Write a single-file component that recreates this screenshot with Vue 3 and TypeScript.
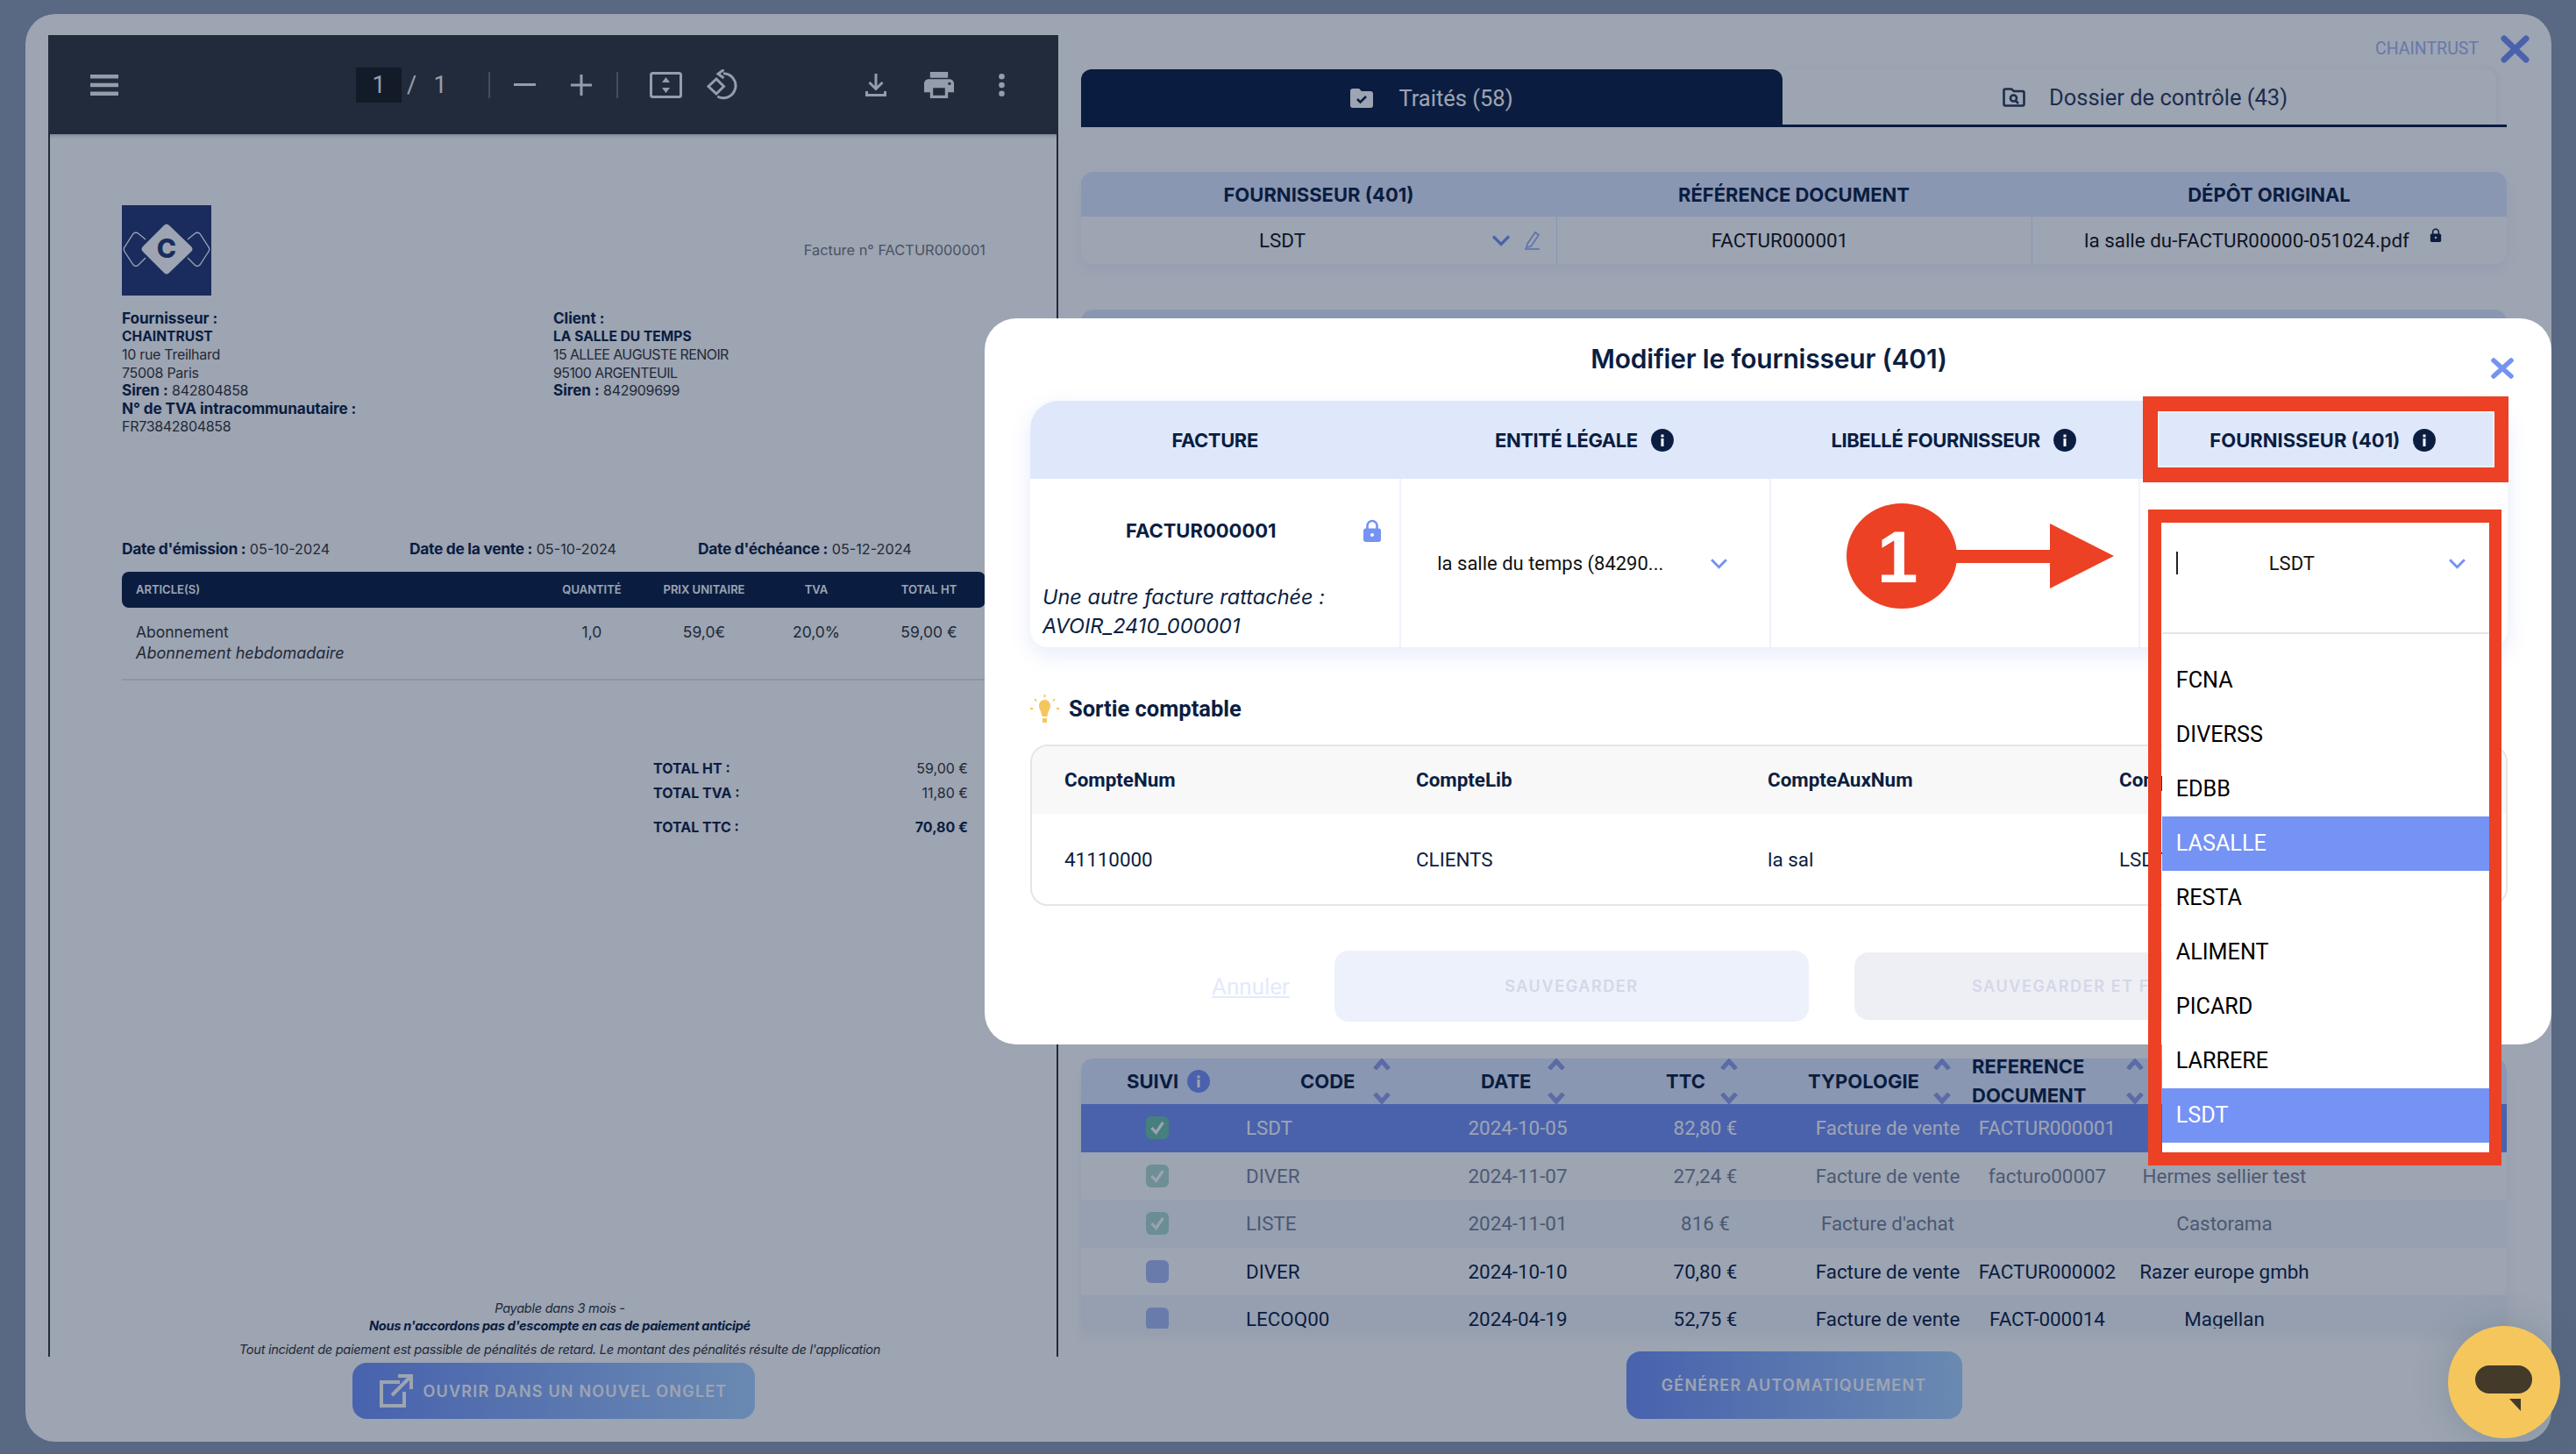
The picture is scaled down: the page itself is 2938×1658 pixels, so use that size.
<script setup lang="ts">
// Factures : visionneuse PDF + panneau fournisseur, avec la modale « Modifier le
// fournisseur (401) » ouverte et les annotations rouges du tutoriel par-dessus.
import { computed } from 'vue'

interface Row {
  code: string
  date: string
  ttc: string
  type: string
  ref: string
  supplier: string
  checked: boolean
  state: 'selected' | 'done' | 'todo'
}

const rows: Row[] = [
  { code: 'LSDT', date: '2024-10-05', ttc: '82,80 €', type: 'Facture de vente', ref: 'FACTUR000001', supplier: '', checked: true, state: 'selected' },
  { code: 'DIVER', date: '2024-11-07', ttc: '27,24 €', type: 'Facture de vente', ref: 'facturo00007', supplier: 'Hermes sellier test', checked: true, state: 'done' },
  { code: 'LISTE', date: '2024-11-01', ttc: '816 €', type: "Facture d'achat", ref: '', supplier: 'Castorama', checked: true, state: 'done' },
  { code: 'DIVER', date: '2024-10-10', ttc: '70,80 €', type: 'Facture de vente', ref: 'FACTUR000002', supplier: 'Razer europe gmbh', checked: false, state: 'todo' },
  { code: 'LECOQ00', date: '2024-04-19', ttc: '52,75 €', type: 'Facture de vente', ref: 'FACT-000014', supplier: 'Magellan', checked: false, state: 'todo' },
]

const sortColumns = ['CODE', 'DATE', 'TTC', 'TYPOLOGIE']
const options = ['FCNA', 'DIVERSS', 'EDBB', 'LASALLE', 'RESTA', 'ALIMENT', 'PICARD', 'LARRERE', 'LSDT']
const highlighted = ['LASALLE', 'LSDT']
const accountCols = [
  { head: 'CompteNum', value: '41110000' },
  { head: 'CompteLib', value: 'CLIENTS' },
  { head: 'CompteAuxNum', value: 'la sal' },
  { head: 'CompteAuxLib', value: 'LSDT' },
]

// QR code décoratif : pseudo-aléatoire mais stable d'un rendu à l'autre
const qrPath = computed(() => {
  const n = 37
  let seed = 42
  let d = ''
  const finder = (x: number, y: number) =>
    x >= 0 && y >= 0 && x < 7 && y < 7
      ? x === 0 || y === 0 || x === 6 || y === 6 || (x > 1 && x < 5 && y > 1 && y < 5)
      : null
  for (let y = 0; y < n; y++) {
    for (let x = 0; x < n; x++) {
      seed = (seed * 1103515245 + 12345) & 0x7fffffff
      let on = (seed >> 16) % 2 === 0
      const f = finder(x, y) ?? finder(x - n + 7, y) ?? finder(x, y - n + 7)
      if (f !== null) on = f
      else if ((x < 8 && y < 8) || (x >= n - 8 && y < 8) || (x < 8 && y >= n - 8)) on = false
      if (on) d += `M${x} ${y}h1v1h-1z`
    }
  }
  return d
})
</script>

<template>
  <div class="page">
    <svg class="sprite" aria-hidden="true">
      <symbol id="chevron" viewBox="0 0 22 14"><path d="M2 2.5 11 11.5 20 2.5" fill="none" stroke="currentColor" stroke-width="3.2" /></symbol>
      <symbol id="sort" viewBox="0 0 20 13"><path d="M2 12 10 3 18 12" fill="none" stroke="currentColor" stroke-width="5" /></symbol>
      <symbol id="info" viewBox="0 0 26 26">
        <circle cx="13" cy="13" r="13" fill="currentColor" />
        <rect x="11.5" y="11" width="3" height="9" fill="#fff" />
        <rect x="11.5" y="6.5" width="3" height="3" fill="#fff" />
      </symbol>
      <symbol id="lock" viewBox="0 0 22 26">
        <path d="M5.5 12V7.5a5.5 5.5 0 0 1 11 0V12" fill="none" stroke="currentColor" stroke-width="2.6" />
        <rect x="1" y="10.5" width="20" height="15.5" rx="3" fill="currentColor" />
        <circle cx="11" cy="18" r="2" fill="#fff" />
      </symbol>
    </svg>

    <div class="shell">
      <!-- Colonne gauche : visionneuse PDF -->
      <section class="left">
        <div class="viewer">
          <header class="toolbar">
            <svg class="tb-menu" width="32" height="24" viewBox="0 0 32 24" fill="currentColor"><rect width="32" height="4.5" /><rect y="9.7" width="32" height="4.5" /><rect y="19.5" width="32" height="4.5" /></svg>
            <span class="tb-page">1</span>
            <span class="tb-total">/&nbsp;&nbsp;1</span>
            <span class="tb-sep tb-sep--a" />
            <svg class="tb-minus" width="25" height="3" viewBox="0 0 25 3" fill="currentColor"><rect width="25" height="3" /></svg>
            <svg class="tb-plus" width="24" height="24" viewBox="0 0 24 24" fill="currentColor"><rect y="10.5" width="24" height="3" /><rect x="10.5" width="3" height="24" /></svg>
            <span class="tb-sep tb-sep--b" />
            <svg class="tb-fit" width="37" height="30" viewBox="0 0 37 30" fill="none">
              <rect x="1.5" y="1.5" width="34" height="27" rx="2" stroke="currentColor" stroke-width="3" />
              <path d="M18.5 6 23 12H14ZM18.5 24 14 18h9Z" fill="currentColor" />
            </svg>
            <svg class="tb-rotate" width="37" height="36" viewBox="0 0 37 36" fill="none" stroke="currentColor" stroke-width="3">
              <path d="M21 4.7A14 14 0 1 1 14.3 31" />
              <path d="M21.5 0.5 15 5.2 21.5 10" />
              <path d="M13 11 21.5 19.5 13 28 4 19.5Z" />
            </svg>
            <svg class="tb-download" width="24" height="26" viewBox="0 0 24 26" fill="none" stroke="currentColor" stroke-width="3">
              <path d="M12 0V17M4.5 10 12 17.5 19.5 10" />
              <path d="M1.5 20V24.5H22.5V20" />
            </svg>
            <svg class="tb-print" width="34" height="30" viewBox="2 3 20 18" preserveAspectRatio="none" fill="currentColor"><path d="M19 8H5c-1.66 0-3 1.34-3 3v6h4v4h12v-4h4v-6c0-1.66-1.34-3-3-3zm-3 11H8v-5h8v5zm3-7c-.55 0-1-.45-1-1s.45-1 1-1 1 .45 1 1-.45 1-1 1zm-1-9H6v4h12V3z" /></svg>
            <svg class="tb-dots" width="7" height="26" viewBox="0 0 7 26" fill="currentColor"><circle cx="3.5" cy="3.3" r="3.3" /><circle cx="3.5" cy="13" r="3.3" /><circle cx="3.5" cy="22.7" r="3.3" /></svg>
          </header>

          <div class="doc">
            <div class="doc-head">
              <svg class="logo" width="102" height="103" viewBox="0 0 102 103">
                <rect width="102" height="103" fill="#263773" />
                <path d="M27 39 19 32.5Q16 30 13 32.5L3.5 47Q1 50 3.5 53.5L13 68Q16 71 19 68L27 60" fill="none" stroke="#fff" stroke-width="1.3" />
                <path d="M75 39 83 32.5Q86 30 89 32.5L98.5 47Q101 50 98.5 53.5L89 68Q86 71 83 68L75 60" fill="none" stroke="#fff" stroke-width="1.3" />
                <path d="M48 23Q51 20 54 23L79 47Q82 50 79 53L54 77Q51 80 48 77L24 53Q21 50 24 47Z" fill="#fff" />
                <text x="51" y="60" class="logo-c">C</text>
              </svg>
              <span class="doc-number">Facture n° FACTUR000001</span>
            </div>
            <div class="parties">
              <div class="party party--supplier">
                <div class="label">Fournisseur :</div>
                <div class="strong">CHAINTRUST</div>
                <div class="soft">10 rue Treilhard</div>
                <div class="soft">75008 Paris</div>
                <div><b class="label">Siren :</b> <span class="soft">842804858</span></div>
                <div class="label">N° de TVA intracommunautaire :</div>
                <div class="soft">FR73842804858</div>
              </div>
              <div class="party">
                <div class="label">Client :</div>
                <div class="strong">LA SALLE DU TEMPS</div>
                <div class="soft soft--caps">15 ALLEE AUGUSTE RENOIR</div>
                <div class="soft soft--caps">95100 ARGENTEUIL</div>
                <div><b class="label">Siren :</b> <span class="soft">842909699</span></div>
              </div>
              <svg class="qr" width="113" height="114" viewBox="0 0 37 37" shape-rendering="crispEdges"><path :d="qrPath" fill="#111" /></svg>
            </div>
            <div class="dates">
              <span><b>Date d'émission :</b> 05-10-2024</span>
              <span><b>Date de la vente :</b> 05-10-2024</span>
              <span><b>Date d'échéance :</b> 05-12-2024</span>
            </div>
            <div class="items items--head">
              <span>ARTICLE(S)</span><span>QUANTITÉ</span><span>PRIX UNITAIRE</span><span>TVA</span><span>TOTAL HT</span>
            </div>
            <div class="items items--row">
              <span>Abonnement<br /><i>Abonnement hebdomadaire</i></span><span>1,0</span><span>59,0€</span><span>20,0%</span><span>59,00 €</span>
            </div>
            <div class="totals">
              <div><b>TOTAL HT :</b><span>59,00 €</span></div>
              <div><b>TOTAL TVA :</b><span>11,80 €</span></div>
              <div class="totals-ttc"><b>TOTAL TTC :</b><b>70,80 €</b></div>
            </div>
            <div class="doc-foot">
              <div>Payable dans 3 mois -</div>
              <div><b>Nous n'accordons pas d'escompte en cas de paiement anticipé</b></div>
              <div class="doc-foot-legal">Tout incident de paiement est passible de pénalités de retard. Le montant des pénalités résulte de l'application</div>
            </div>
          </div>
        </div>
        <button type="button" class="grad-btn grad-btn--open">
          <svg width="38" height="38" viewBox="0 0 38 38" fill="none" stroke="currentColor" stroke-width="4">
            <path d="M23 9H2V36H28V20" />
            <path d="M14 24 34 4M21 2H36V17" />
          </svg>
          OUVRIR DANS UN NOUVEL ONGLET
        </button>
      </section>

      <!-- Colonne droite : onglets, récap, liste -->
      <section class="right">
        <div class="topbar">
          <span class="brand">CHAINTRUST</span>
          <svg class="top-close" width="33" height="32" viewBox="0 0 33 32"><path d="M4 4 29 28M29 4 4 28" fill="none" stroke="currentColor" stroke-width="7" stroke-linecap="round" /></svg>
        </div>
        <div class="tabs">
          <div class="tab tab--active">
            <svg width="26" height="22" viewBox="0 0 26 22"><path d="M3 0H10L13 3H23Q26 3 26 6V19Q26 22 23 22H3Q0 22 0 19V3Q0 0 3 0Z" fill="currentColor" /><path d="M8 12 11.5 15.5 18 9" fill="none" stroke="#0b1e42" stroke-width="2.6" /></svg>
            Traités (58)
          </div>
          <div class="tab">
            <svg width="26" height="22" viewBox="0 0 26 22" fill="none" stroke="currentColor" stroke-width="2.6"><path d="M3 1.5H10L13 4H23Q24.5 4 24.5 6V18.5Q24.5 20.5 23 20.5H3Q1.5 20.5 1.5 18.5V3.5Q1.5 1.5 3 1.5Z" /><circle cx="12.5" cy="12" r="3.5" /><path d="M15 15 18 18" /></svg>
            Dossier de contrôle (43)
          </div>
        </div>

        <div class="summary">
          <div class="summary-head">FOURNISSEUR (401)</div>
          <div class="summary-head">RÉFÉRENCE DOCUMENT</div>
          <div class="summary-head">DÉPÔT ORIGINAL</div>
          <div class="summary-cell summary-cell--supplier">
            <span>LSDT</span>
            <svg class="summary-chevron" width="22" height="14"><use href="#chevron" /></svg>
            <svg class="summary-pen" width="19" height="22" viewBox="0 0 19 22" fill="none" stroke="currentColor" stroke-width="1.6"><path d="M4 15 13 2 17 5 8 18 3 19Z" /><path d="M1 21H18" /></svg>
          </div>
          <div class="summary-cell summary-cell--ref">FACTUR000001</div>
          <div class="summary-cell summary-cell--file">
            <span>la salle du-FACTUR00000-051024.pdf</span>
            <svg class="summary-lock" width="14" height="16"><use href="#lock" /></svg>
          </div>
        </div>

        <div class="hidden-block"><div class="hidden-block-head" /></div>

        <div class="list">
          <div class="list-grid list-head">
            <div class="list-th list-th--suivi">SUIVI <svg width="26" height="26"><use href="#info" /></svg></div>
            <div v-for="c in sortColumns" :key="c" class="list-th">
              {{ c }}
              <span class="sort"><svg width="20" height="13"><use href="#sort" /></svg><svg class="sort-down" width="20" height="13"><use href="#sort" /></svg></span>
            </div>
            <div class="list-th list-th--ref">
              REFERENCE<br />DOCUMENT
              <span class="sort"><svg width="20" height="13"><use href="#sort" /></svg><svg class="sort-down" width="20" height="13"><use href="#sort" /></svg></span>
            </div>
            <div class="list-th" />
          </div>
          <div v-for="(r, i) in rows" :key="i" class="list-grid list-row" :class="`list-row--${r.state}`">
            <span class="check-wrap">
              <span class="check" :class="{ 'check--on': r.checked }">
                <svg v-if="r.checked" width="26" height="26" viewBox="0 0 26 26"><path d="M6.5 13 11.5 18.5 19.5 7" fill="none" stroke="#fff" stroke-width="3.2" /></svg>
              </span>
            </span>
            <span class="list-code">{{ r.code }}</span>
            <span>{{ r.date }}</span>
            <span>{{ r.ttc }}</span>
            <span>{{ r.type }}</span>
            <span>{{ r.ref }}</span>
            <span>{{ r.supplier }}</span>
          </div>
        </div>

        <button type="button" class="grad-btn grad-btn--auto">GÉNÉRER AUTOMATIQUEMENT</button>
      </section>
    </div>

    <div class="backdrop" />

    <!-- Modale -->
    <div class="modal">
      <h2 class="modal-title">Modifier le fournisseur (401)</h2>
      <svg class="modal-close" width="28" height="26" viewBox="0 0 28 26"><path d="M4 4 24 22M24 4 4 22" fill="none" stroke="currentColor" stroke-width="5.5" stroke-linecap="round" /></svg>

      <div class="edit">
        <div class="edit-th">FACTURE</div>
        <div class="edit-th">ENTITÉ LÉGALE <svg width="26" height="26"><use href="#info" /></svg></div>
        <div class="edit-th">LIBELLÉ FOURNISSEUR <svg width="26" height="26"><use href="#info" /></svg></div>
        <div class="edit-th">FOURNISSEUR (401) <svg width="26" height="26"><use href="#info" /></svg></div>

        <div class="edit-td edit-td--invoice">
          <div class="invoice-line">
            <b>FACTUR000001</b>
            <svg class="invoice-lock" width="22" height="26"><use href="#lock" /></svg>
          </div>
          <i class="invoice-note">Une autre facture rattachée :<br />AVOIR_2410_000001</i>
        </div>
        <div class="edit-td edit-td--select">
          <span>la salle du temps (84290...</span>
          <svg class="blue" width="21" height="13"><use href="#chevron" /></svg>
        </div>
        <div class="edit-td" />
        <div class="edit-td edit-td--supplier">
          <div class="combo">
            <div class="combo-input">
              <span class="caret" />
              <span class="combo-value">LSDT</span>
              <svg class="blue" width="21" height="13"><use href="#chevron" /></svg>
            </div>
            <ul class="combo-list">
              <li v-for="o in options" :key="o" :class="{ 'is-hot': highlighted.includes(o) }">{{ o }}</li>
            </ul>
          </div>
        </div>
      </div>

      <div class="output-title">
        <svg width="33" height="32" viewBox="0 0 33 32">
          <path d="M16.5 6C11.5 6 10 10 10 13 10 17 13 19 13.5 25H19.5C20 19 23 17 23 13 23 10 21.5 6 16.5 6Z" fill="#f5c65c" />
          <rect x="14" y="27" width="5" height="5" fill="#f5c65c" />
          <path d="M16.5 0V3M5 5 7 7.5M28 5 26 7.5M0 16H3M30 16H33" stroke="#f5c65c" stroke-width="1.8" />
        </svg>
        Sortie comptable
      </div>

      <div class="ledger">
        <div v-for="c in accountCols" :key="c.head" class="ledger-col">
          <div class="ledger-th">{{ c.head }}</div>
          <div class="ledger-td">{{ c.value }}</div>
        </div>
      </div>

      <div class="modal-actions">
        <a class="cancel">Annuler</a>
        <button type="button" class="action action--save">SAUVEGARDER</button>
        <button type="button" class="action action--close">SAUVEGARDER ET FERMER</button>
      </div>
    </div>

    <!-- Annotations du tutoriel -->
    <div class="callout callout--head" />
    <div class="callout callout--list" />
    <svg class="pointer" width="305" height="120" viewBox="0 0 305 120">
      <ellipse cx="63" cy="60" rx="63" ry="60" fill="#ec4125" />
      <path d="M125 53H232V23L305 60 232 97V68H125Z" fill="#ec4125" />
      <text x="58" y="90" class="pointer-num">1</text>
    </svg>

    <!-- Bulle de chat -->
    <div class="chat">
      <svg width="66" height="52" viewBox="0 0 66 52" fill="#433a2a">
        <rect x="0" y="0" width="65" height="32" rx="16" />
        <path d="M39 38H52V52Z" />
      </svg>
    </div>
  </div>
</template>

<style scoped>
.page {
  --navy: #0b1e42;
  --blue: #7592f5;
  --pale: #dfe9ff;
  --ui: Roboto, 'Liberation Sans', sans-serif;
  --head: Inter, 'Noto Sans', sans-serif;
  position: relative;
  width: 2938px;
  height: 1658px;
  overflow: hidden;
  box-sizing: border-box;
  padding: 16px 28px 14px 29px;
  background: #8e9bb1;
  font-family: var(--ui);
  color: var(--navy);
}
.sprite {
  position: absolute;
  width: 0;
  height: 0;
}
.blue {
  color: var(--blue);
}

.shell {
  display: grid;
  grid-template-columns: 1152px 1626px;
  column-gap: 26px;
  height: 100%;
  box-sizing: border-box;
  padding: 24px 0 0 26px;
  background: #fff;
  border-radius: 34px;
}

/* Visionneuse */
.left {
  display: flex;
  flex-direction: column;
  align-items: center;
}
.viewer {
  width: 100%;
  height: 1507px;
  display: flex;
  flex-direction: column;
  overflow: hidden;
}
.toolbar {
  flex: 0 0 113px;
  display: flex;
  align-items: center;
  background: #323639;
  color: #f1f3f4;
  box-shadow: 0 2px 4px rgba(0, 0, 0, 0.2);
  position: relative;
  font-size: 27px;
}
.tb-menu { margin-left: 48px; }
.tb-page {
  margin-left: 271px;
  width: 52px;
  height: 40px;
  line-height: 40px;
  text-align: center;
  background: #191b1c;
}
.tb-total { margin-left: 6px; width: 45px; white-space: nowrap; word-spacing: 3px; }
.tb-sep {
  width: 2px;
  height: 30px;
  background: #6b6f72;
}
.tb-sep--a { margin-left: 48px; }
.tb-minus { margin-left: 27px; }
.tb-plus { margin-left: 40px; }
.tb-sep--b { margin-left: 28px; }
.tb-fit { margin-left: 36px; }
.tb-rotate { margin-left: 26px; }
.tb-download { margin-left: 146px; }
.tb-print { margin-left: 43px; }
.tb-dots { margin-left: 51px; }

.doc {
  flex: 1;
  min-height: 0;
  box-sizing: border-box;
  padding: 81px 81px 0 82px;
  border: solid #323639;
  border-width: 0 2px;
  font-family: var(--head);
  font-size: 16px;
  color: #333;
}
.doc-head {
  display: flex;
  align-items: center;
  justify-content: space-between;
}
.logo { display: block; }
.logo-c {
  font: 800 30px var(--head);
  fill: #263773;
  text-anchor: middle;
}
.doc-number {
  font-size: 16.4px;
  color: #777;
  margin-bottom: 2px;
}
.parties {
  position: relative;
  display: flex;
  height: 263px;
  margin-top: 16px;
  line-height: 20.5px;
  color: var(--navy);
}
.party { flex: 0 0 492px; white-space: nowrap; }
.party .label { font-size: 17.2px; font-weight: 700; color: var(--navy); letter-spacing: -0.1px; }
.party .strong { font-size: 15.6px; font-weight: 700; color: var(--navy); }
.party .soft { font-size: 16px; font-weight: 400; color: #333; letter-spacing: -0.3px; }
.party .soft--caps { letter-spacing: -0.6px; }
.qr { margin-left: auto; position: relative; left: -4px; }
.dates {
  display: grid;
  grid-template-columns: 328px 329px 1fr;
  line-height: 20px;
  font-size: 16.2px;
  white-space: nowrap;
}
.dates b { font-size: 17.4px; color: var(--navy); font-weight: 700; letter-spacing: -0.3px; }
.items {
  display: grid;
  grid-template-columns: 472px repeat(3, 128px) 1fr;
  text-align: center;
}
.items > span:first-child { text-align: left; padding-left: 16px; }
.items--head {
  margin-top: 16px;
  height: 41px;
  padding-bottom: 1px;
  box-sizing: border-box;
  align-items: center;
  background: var(--navy);
  border-radius: 8px;
  color: #fff;
  font-size: 13px;
  font-weight: 600;
}
.items--row {
  height: 83px;
  box-sizing: border-box;
  padding-top: 16px;
  line-height: 24px;
  border-bottom: 2px solid #e4e6ea;
  font-size: 17.5px;
}
.items--row i { font-size: 18px; }
.totals {
  margin: 88px 0 0 606px;
  width: 359px;
  font-size: 16px;
}
.totals > div {
  display: flex;
  justify-content: space-between;
  height: 28px;
  line-height: 24px;
}
.totals b { color: var(--navy); font-weight: 700; }
.totals-ttc { margin-top: 11px; }
.doc-foot {
  margin-top: 523px;
  padding-left: 14px;
  text-align: center;
  font-style: italic;
  font-size: 14.6px;
  line-height: 20px;
  letter-spacing: -0.3px;
}
.doc-foot b { color: var(--navy); font-weight: 700; }
.doc-foot-legal { margin-top: 7px; white-space: nowrap; }

.grad-btn {
  display: flex;
  align-items: center;
  justify-content: center;
  gap: 12px;
  border: 0;
  border-radius: 16px;
  background: linear-gradient(90deg, #7292f8, #aad3ff);
  color: #fff;
  font-family: var(--head);
  font-weight: 600;
  font-size: 18px;
  letter-spacing: 1.2px;
  white-space: nowrap;
  padding: 0;
}
.grad-btn--open {
  margin-top: 7px;
  width: 459px;
  height: 64px;
}
.grad-btn--auto {
  margin: 26px auto 0;
  width: 383px;
  height: 77px;
}

/* Panneau droit */
.right {
  display: flex;
  flex-direction: column;
  min-width: 0;
}
.topbar {
  height: 39px;
  display: flex;
  align-items: flex-start;
  justify-content: flex-end;
  gap: 25px;
  margin-right: -26px;
}
.brand {
  margin-top: 4px;
  font-size: 19.5px;
  color: #a6b7ee;
}
.top-close { color: #7592f5; }
.tabs {
  display: flex;
  height: 66px;
  font-size: 25.5px;
  border-bottom: 3px solid var(--navy);
  box-sizing: border-box;
}
.tab {
  flex: 0 0 800px;
  display: flex;
  align-items: center;
  justify-content: center;
  gap: 29px;
  color: #2c3958;
}
.tab + .tab {
  flex-basis: 814px;
  padding-left: 13px;
  gap: 27px;
  box-sizing: border-box;
  border-radius: 12px 12px 0 0;
  box-shadow: 2px -1px 8px rgba(0, 0, 0, 0.05);
}
.tab--active {
  background: var(--navy);
  color: #fff;
  height: 66px;
  border-radius: 12px 12px 0 0;
}

.summary {
  margin-top: 51px;
  display: grid;
  grid-template-columns: repeat(3, 1fr);
  border-radius: 14px;
  overflow: hidden;
  box-shadow: 0 6px 16px rgba(100, 130, 220, 0.08);
}
.summary-head {
  height: 51px;
  display: flex;
  align-items: center;
  justify-content: center;
  background: var(--pale);
  font-family: var(--head);
  font-weight: 700;
  font-size: 22px;
}
.summary-cell {
  height: 54px;
  display: flex;
  align-items: center;
  font-size: 22.4px;
  color: #111;
  border-left: 1px solid var(--pale);
}
.summary-cell:nth-child(4) { border-left: 0; }
.summary-cell--supplier { padding-left: 203px; }
.summary-chevron { margin-left: auto; color: var(--blue); }
.summary-pen { margin: 0 18px 0 15px; color: #94aaf3; }
.summary-cell--ref { justify-content: center; padding-right: 33px; }
.summary-cell--file { padding-left: 59px; }
.summary-lock { margin: -12px 0 0 23px; color: var(--navy); }

.hidden-block {
  height: 854px;
  margin-top: 52px;
}
.hidden-block-head {
  height: 51px;
  background: var(--pale);
  border-radius: 14px 14px 0 0;
}

.list {
  height: 308px;
  overflow: hidden;
  border-radius: 14px 14px 0 0;
  box-shadow: 0 10px 14px rgba(60, 80, 130, 0.06);
}
.list-grid {
  display: grid;
  grid-template-columns: 174px 223px 202px 226px 190px 174px 230px 207px;
}
.list-head {
  height: 52px;
  background: var(--pale);
}
.list-th {
  position: relative;
  display: flex;
  align-items: center;
  font-family: var(--head);
  font-weight: 700;
  font-size: 22px;
  white-space: nowrap;
}
.list-th--suivi { padding-left: 52px; gap: 10px; color: var(--navy); }
.list-th--suivi svg { color: var(--blue); }
.list-th:nth-child(2) { padding-left: 76px; }
.list-th:nth-child(3) { padding-left: 59px; }
.list-th:nth-child(4) { padding-left: 68px; }
.list-th:nth-child(5) { padding-left: 4px; }
.list-th--ref { padding-left: 1px; line-height: 33px; height: 52px; }
.sort {
  position: absolute;
  top: 0;
  height: 100%;
  display: flex;
  flex-direction: column;
  justify-content: space-between;
  color: #8fa0ea;
}
.sort svg { display: block; }
.sort-down { transform: scaleY(-1); }
.list-th:nth-child(2) .sort { left: 159px; }
.list-th:nth-child(3) .sort { left: 135px; }
.list-th:nth-child(4) .sort { left: 130px; }
.list-th:nth-child(5) .sort { left: 147px; }
.list-th--ref .sort { left: 177px; }

.list-row {
  height: 54.5px;
  align-items: center;
  text-align: center;
  font-size: 22.4px;
  color: var(--navy);
  background: #f6f8fc;
}
.list-row--selected {
  background: var(--blue);
  color: #fff;
}
.list-row--done > span { opacity: 0.55; }
.list-row:nth-child(3) { background: #fff; }
.list-row:nth-child(4) { background: #f6f8fc; }
.list-row:nth-child(5) { background: #fff; }
.list-row:nth-child(6) { background: #f4f7fc; }
.list-code { text-align: left; padding-left: 14px; }
.check-wrap { display: flex; justify-content: center; }
.check {
  width: 26px;
  height: 26px;
  border-radius: 6px;
  background: #a9bbf3;
}
.check svg { display: block; }
.check--on { background: #6ec3a8; }

/* Overlay et modale */
.backdrop {
  position: absolute;
  inset: 0;
  background: rgba(11, 28, 62, 0.4);
}
.modal {
  position: absolute;
  left: 1123px;
  top: 363px;
  width: 1787px;
  height: 828px;
  box-sizing: border-box;
  padding: 23px 50px 0 52px;
  background: #fff;
  border-radius: 36px;
}
.modal-title {
  margin: 0;
  text-align: center;
  font-family: var(--head);
  font-size: 30px;
  font-weight: 600;
  line-height: 46px;
  letter-spacing: -0.2px;
  color: var(--navy);
}
.modal-close {
  position: absolute;
  right: 42px;
  top: 44px;
  color: var(--blue);
}
.edit {
  margin-top: 25px;
  display: grid;
  grid-template-columns: repeat(4, 1fr);
  grid-template-rows: 89px 192px;
  border-radius: 32px 32px 20px 20px;
  box-shadow: 0 8px 24px rgba(100, 130, 230, 0.16);
}
.edit-th {
  display: flex;
  align-items: center;
  justify-content: center;
  gap: 15px;
  background: #dfe8fb;
  font-family: var(--head);
  font-weight: 700;
  font-size: 22px;
  letter-spacing: -0.4px;
  color: var(--navy);
  white-space: nowrap;
}
.edit-th svg { color: var(--navy); }
.edit-th:first-child { border-radius: 32px 0 0 0; }
.edit-th:nth-child(4) { border-radius: 0 32px 0 0; letter-spacing: 0; }
.edit-td {
  position: relative;
  border-left: 2px solid #eef2fd;
  font-size: 22px;
  color: #111;
}
.edit-td:nth-child(5) { border-left: 0; }
.edit-td--invoice { padding: 43px 0 0 14px; }
.invoice-line {
  display: flex;
  align-items: center;
  justify-content: space-between;
  padding: 0 20px 0 95px;
  height: 32px;
  font-family: var(--head);
  font-size: 22px;
  color: var(--navy);
}
.invoice-line b { font-weight: 700; }
.invoice-lock { color: var(--blue); }
.invoice-note {
  display: block;
  margin-top: 43px;
  font-family: var(--head);
  font-size: 23.5px;
  line-height: 33px;
  color: var(--navy);
}
.edit-td--select {
  display: flex;
  align-items: center;
  justify-content: space-between;
  padding: 0 47px 0 41px;
}
.combo {
  position: absolute;
  z-index: 2;
  left: 25px;
  top: 50px;
  width: 373px;
  height: 718px;
  background: #fff;
}
.combo-input {
  position: relative;
  height: 127px;
  box-sizing: border-box;
  padding-bottom: 33px;
  display: flex;
  align-items: center;
  border-bottom: 2px solid #e5e5e5;
  font-size: 22px;
}
.caret {
  width: 2px;
  height: 26px;
  margin: 0 0 0 16px;
  background: #222;
}
.combo-value { margin-left: 104px; }
.combo-input .blue { margin-left: auto; margin-right: 26px; }
.combo-list {
  margin: 22px 0 0;
  padding: 0;
  list-style: none;
  font-size: 25.2px;
  color: #000;
}
.combo-list li {
  height: 62px;
  line-height: 62px;
  padding-left: 16px;
}
.combo-list li.is-hot {
  background: var(--blue);
  color: #fff;
}
.output-title {
  margin-top: 54px;
  height: 32px;
  display: flex;
  align-items: center;
  gap: 11px;
  font-size: 25.5px;
  font-weight: 700;
  color: var(--navy);
}
.ledger {
  margin-top: 25px;
  height: 184px;
  box-sizing: border-box;
  display: grid;
  grid-template-columns: 401px 401px 401px 1fr;
  border: 2px solid #e5e5e5;
  border-radius: 20px;
  overflow: hidden;
}
.ledger-th {
  height: 77px;
  line-height: 77px;
  padding-left: 37px;
  background: #f8f8f8;
  font-size: 22.4px;
  font-weight: 700;
  white-space: nowrap;
}
.ledger-td {
  height: 104px;
  line-height: 104px;
  padding-left: 37px;
  font-size: 22.4px;
}
.modal-actions {
  margin-top: 51px;
  display: flex;
  align-items: center;
  padding-left: 207px;
}
.cancel {
  font-size: 26px;
  color: #e3eafb;
  text-decoration: underline;
  margin-right: 51px;
}
.action {
  width: 541px;
  border: 0;
  border-radius: 16px;
  font-family: var(--head);
  font-size: 18px;
  font-weight: 600;
  letter-spacing: 1.6px;
  color: #d3d7e8;
  padding: 0;
}
.action--save {
  height: 81px;
  background: #edf1fc;
}
.action--close {
  height: 77px;
  margin-left: 52px;
  background: #eeeff5;
}

/* Annotations */
.callout {
  position: absolute;
  box-sizing: border-box;
  border: solid #ec4125;
  pointer-events: none;
}
.callout--head {
  left: 2444px;
  top: 452px;
  width: 417px;
  height: 98px;
  border-width: 17px 16px 17px 17px;
  box-shadow: inset 0 0 0 1.5px rgba(255, 255, 255, 0.6);
}
.callout--list {
  left: 2450px;
  top: 581px;
  width: 403px;
  height: 748px;
  border-width: 15px;
}
.pointer {
  position: absolute;
  left: 2106px;
  top: 574px;
}
.pointer-num {
  font: 700 84px 'Liberation Sans', sans-serif;
  fill: #fff;
  text-anchor: middle;
}

.chat {
  position: absolute;
  left: 2792px;
  top: 1512px;
  width: 128px;
  height: 128px;
  display: flex;
  align-items: center;
  justify-content: center;
  border-radius: 50%;
  background: #f5c65c;
  box-shadow: 0 0 40px rgba(60, 90, 100, 0.25);
}
.chat svg { margin: 14px 0 0 0; }
</style>
